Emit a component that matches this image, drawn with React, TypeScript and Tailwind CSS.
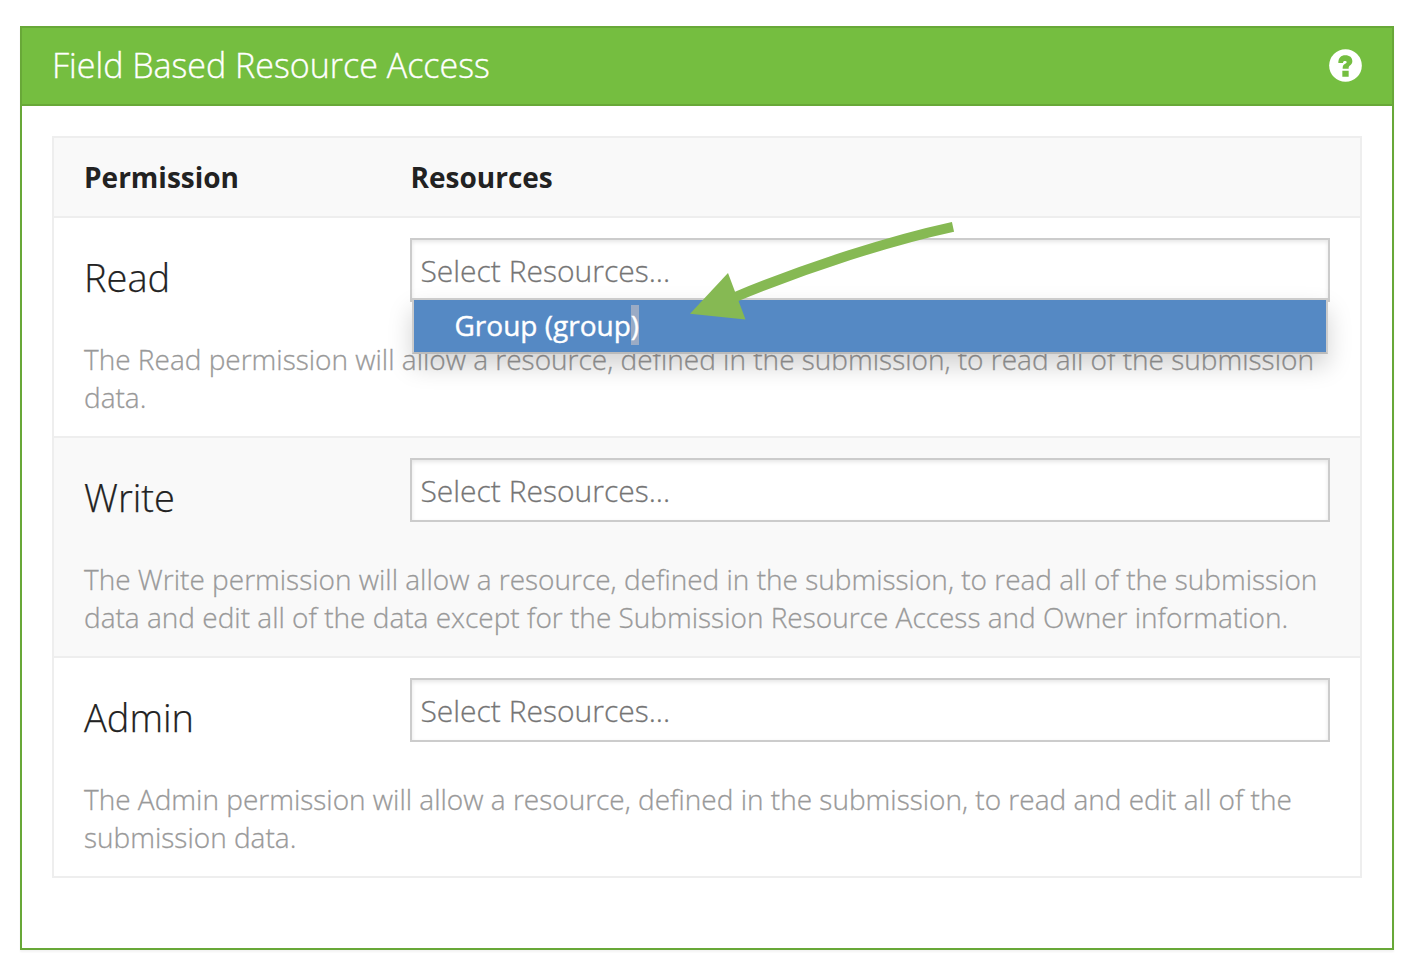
import React from "react";

const rows = [
  {
    name: "Read",
    open: true,
    shade: false,
    lines: ["The Read permission will allow a resource, defined in the submission, to read all of the submission", "data."],
  },
  {
    name: "Write",
    open: false,
    shade: true,
    lines: [
      "The Write permission will allow a resource, defined in the submission, to read all of the submission",
      "data and edit all of the data except for the Submission Resource Access and Owner information.",
    ],
  },
  {
    name: "Admin",
    open: false,
    shade: false,
    lines: ["The Admin permission will allow a resource, defined in the submission, to read and edit all of the", "submission data."],
  },
];

function HelpIcon() {
  return (
    <svg className="mb-[2px] size-[33px]" viewBox="0 0 99 99">
      <circle cx="49.500" cy="49.500" r="49" fill="#fff" />
      <path
        d="M28 42C28 27 36 19 49 19C62 19 70 26 70 37C70 48 60 50 59 55V59H41V56C41 48 46 46 51 43C54 41 54 36 49 36C44 36 42 38 42 42ZM40 65H59V83H40Z"
        fill="#75be40"
      />
    </svg>
  );
}

function Arrow() {
  return (
    <svg className="pointer-events-none absolute left-[278px] top-[-20px] z-20 h-[104px] w-[266px]" viewBox="690 220 266 104">
      <path d="M734 297.500C810 266 892 240 953 226.800" fill="none" stroke="#86b953" strokeWidth="10" />
      <path d="M690 313.700L728 273L745.500 319.500Z" fill="#86b953" />
    </svg>
  );
}

export default function App() {
  return (
    <div className="h-[968px] w-[1416px] bg-white pl-5 pt-[26px] font-['Open_Sans',sans-serif] text-[#222]">
      <section className="h-[924px] w-[1374px] border-2 border-[#68a838] shadow-[0_2px_2px_rgba(0,0,0,0.05)]">
        <header className="flex h-[78px] items-center justify-between border-b-2 border-[#68a838] bg-[#75be40] px-[30px] text-white">
          <h1 className="mb-[2px] whitespace-nowrap text-[34px] font-light leading-[46px] [-webkit-text-stroke:0.35px]">Field Based Resource Access</h1>
          <HelpIcon />
        </header>
        <div className="ml-[30px] mt-[30px] w-[1310px] border-2 border-[#eee]">
          <div className="flex h-[78px] items-center bg-[#f9f9f9] pl-[30px] text-[28px] font-bold leading-[38px]">
            <span className="w-[326.500px]">Permission</span>
            <span>Resources</span>
          </div>
          {rows.map((row) => (
            <div key={row.name} className={`h-[220px] border-t-2 border-[#eee] pl-[30px] ${row.shade ? "bg-[#f9f9f9]" : "bg-white"}`}>
              <div className="flex h-[122px] pt-5">
                <h2 className="w-[326px] pt-[13px] text-[38px] font-light leading-[52px] [-webkit-text-stroke:0.25px]">{row.name}</h2>
                <div className="relative h-16 w-[920px] border-2 border-[#ccc] bg-white pl-[8.5px] text-[30px] font-light leading-[62px] text-[#757575] shadow-[inset_0_2px_4px_rgba(0,0,0,0.1)] [-webkit-text-stroke:0.3px]">
                  Select Resources...
                  {row.open && (
                    <div className="absolute left-0 top-[58px] z-10 h-[56px] w-[916px] border-2 border-[#bbb] border-x-[#ccc] border-t-[#ccc] bg-[#5589c4] pl-[40.5px] text-[28px] font-normal leading-[50px] text-white shadow-[0_12px_24px_rgba(0,0,0,0.175)] [-webkit-text-stroke:0.4px]">
                      Group (group<span className="bg-[#9aabc5] py-px">)</span>
                    </div>
                  )}
                  {row.open && <Arrow />}
                </div>
              </div>
              <p className="whitespace-nowrap text-[28px] font-light leading-[38px] text-[#999] [-webkit-text-stroke:0.3px]">
                {row.lines.map((line) => (
                  <span key={line} className="block">{line}</span>
                ))}
              </p>
            </div>
          ))}
        </div>
      </section>
    </div>
  );
}
